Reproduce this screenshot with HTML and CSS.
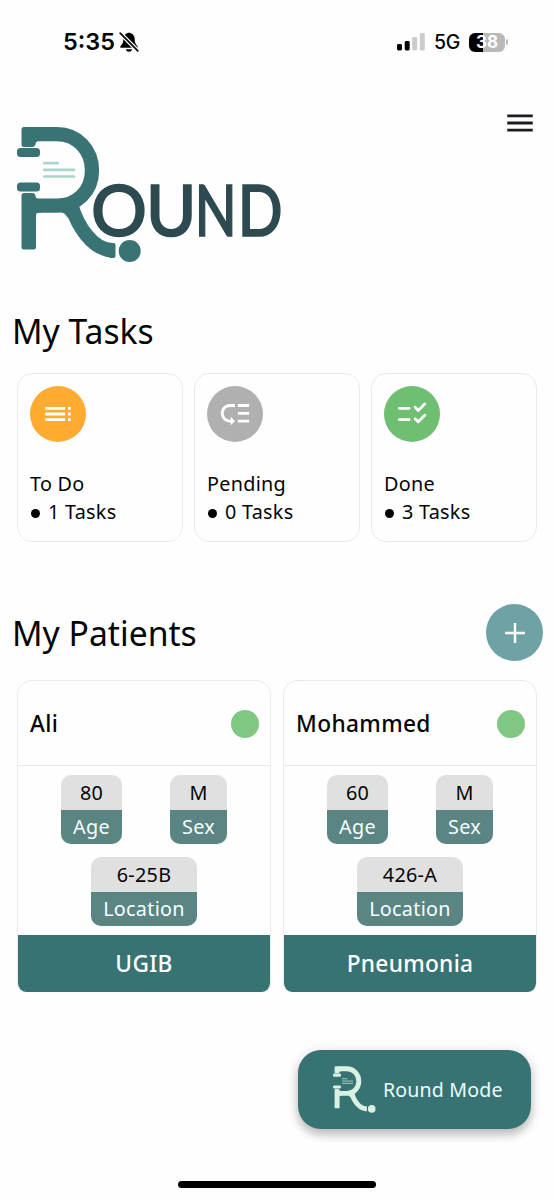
FILE: index.html
```html
<!DOCTYPE html>
<html lang="en">
<head>
<meta charset="utf-8">
<meta name="viewport" content="width=device-width, initial-scale=1">
<title>Round</title>
<link rel="stylesheet" href="styles.css">
</head>
<body>
<svg class="defs" aria-hidden="true">
  <symbol id="mark" viewBox="17 126 125 137">
    <path class="mark-tube" d="M35 134.2H57C77 134.2 92 150 92 170.500C92 191 77 205.700 57 205.700H30"/>
    <path class="mark-tube" d="M71.500 206C77 224 91 249.500 113 250.500"/>
    <path class="mark-fill" d="M24 127H40V141H39Q36 141 35.500 144Q35 147 32.500 147H24Q21.500 147 21.500 144.500V129.500Q21.500 127 24 127ZM24 193H32.500Q35 193 35.500 196Q36 199 39 199H42V212.500H39Q36 212.500 36 215.500V247Q36 249.500 33.500 249.500H24Q21.500 249.500 21.500 247V195.500Q21.500 193 24 193ZM66 199L85 201Q78 205 79 209L75 220L67 217Q65 212.500 61 212.500Z"/>
    <rect class="mark-fill" x="17" y="148" width="23" height="9" rx="3.500"/>
    <rect class="mark-fill" x="17" y="182.500" width="23" height="9" rx="3.500"/>
    <rect class="mark-fill" x="109" y="243" width="6.500" height="15" rx="2"/>
    <circle class="mark-fill" cx="129.700" cy="251" r="11"/>
    <path class="mark-lines" d="M44.300 163.200H57.700M44.300 169.900H74M44.300 176.500H74"/>
  </symbol>
</svg>

<div class="statusbar">
  <div class="clock">
    <span>5:35</span>
    <svg class="bell" viewBox="0 0 20 20"><path d="M10 0.800C7.500 0.800 4.500 3 4.300 7C4.200 11 3.500 12 1.300 14.500Q.8 15.800 2 15.800H18Q19.200 15.800 18.700 14.500C16.500 12 15.800 11 15.700 7C15.500 3 12.500 .8 10 .8ZM6.800 17.300H13.200Q12.500 19.800 10 19.800T6.800 17.300Z"/><path class="bell-gap" d="M1.200 1.200L18.800 18.800"/><path class="bell-slash" d="M1.200 1.200L18.800 18.800"/></svg>
  </div>
  <div class="signals">
    <svg class="bars" viewBox="0 0 28 18"><rect x="0" y="11" width="5" height="6.500" rx="1.400"/><rect x="7.700" y="8" width="5" height="9.500" rx="1.400"/><rect class="dim" x="15.200" y="4" width="5" height="13.500" rx="1.400"/><rect class="dim" x="22.800" y="0" width="5" height="17.500" rx="1.400"/></svg>
    <span class="net">5G</span>
    <div class="battery"><span class="level">38</span><span class="tip"></span></div>
  </div>
</div>

<header class="header">
  <svg class="logo" viewBox="17 126 265 137">
    <use href="#mark" x="17" y="126" width="125" height="137"/>
    <g class="wordmark">
      <text transform="translate(91 235.500) scale(.97 1)">O</text>
      <text transform="translate(146 235.500) scale(.95 1)">U</text>
      <text transform="translate(194.800 235.500) scale(.76 1)">N</text>
      <text transform="translate(237.800 235.500) scale(.82 1)">D</text>
    </g>
  </svg>
  <svg class="menu" viewBox="0 0 24 24"><path d="M3 18h18v-2H3v2zm0-5h18v-2H3v2zm0-7v2h18V6H3z"/></svg>
</header>

<main>
  <h1 class="tasks-title">My Tasks</h1>
  <section class="tasks">
    <article class="task">
      <span class="badge todo"><svg viewBox="0 0 24 24"><path d="M3 9h14V7H3v2zm0 4h14v-2H3v2zm0 4h14v-2H3v2zm16 0h2v-2h-2v2zm0-10v2h2V7h-2zm0 6h2v-2h-2v2z"/></svg></span>
      <p>To Do</p><p class="count"><i></i>1 Tasks</p>
    </article>
    <article class="task">
      <span class="badge pending"><svg viewBox="0 0 24 24"><path d="M14 5h8v2h-8zm0 5.500h8v2h-8zm0 5.500h8v2h-8zM2 11.500C2 15.080 4.920 18 8.500 18H9v2l3-3-3-3v2h-.5C6.020 16 4 13.980 4 11.500S6.020 7 8.500 7H12V5H8.500C4.920 5 2 7.920 2 11.500z"/></svg></span>
      <p>Pending</p><p class="count"><i></i>0 Tasks</p>
    </article>
    <article class="task">
      <span class="badge done"><svg viewBox="0 0 24 24"><path class="stroke" d="M3 8H10M3 16H10M14.200 7.300L16.400 9.500L21 4.900M14.200 15.300L16.400 17.500L21 12.900"/></svg></span>
      <p>Done</p><p class="count"><i></i>3 Tasks</p>
    </article>
  </section>

  <div class="patients-head">
    <h1>My Patients</h1>
    <span class="add"><svg viewBox="0 0 24 24"><path d="M19 12.850h-6.150v6.150h-1.700v-6.150H5v-1.700h6.150V5h1.700v6.150H19z"/></svg></span>
  </div>
  <section class="patients">
    <article class="patient">
      <div class="name"><span>Ali</span><i></i></div>
      <div class="facts">
        <dl class="chip age"><dd>80</dd><dt>Age</dt></dl>
        <dl class="chip sex"><dd>M</dd><dt>Sex</dt></dl>
        <dl class="chip location"><dd>6-25B</dd><dt>Location</dt></dl>
      </div>
      <div class="diagnosis">UGIB</div>
    </article>
    <article class="patient">
      <div class="name"><span>Mohammed</span><i></i></div>
      <div class="facts">
        <dl class="chip age"><dd>60</dd><dt>Age</dt></dl>
        <dl class="chip sex"><dd>M</dd><dt>Sex</dt></dl>
        <dl class="chip location"><dd>426-A</dd><dt>Location</dt></dl>
      </div>
      <div class="diagnosis">Pneumonia</div>
    </article>
  </section>
  <div class="round-mode">
    <svg viewBox="17 126 125 137"><use href="#mark" x="17" y="126" width="125" height="137"/></svg>
    <span>Round Mode</span>
  </div>
</main>
<div class="home"></div>
</body>
</html>
```
FILE: styles.css
```css
* { box-sizing: border-box; }
body {
  margin: 0;
  height: 1200px;
  display: flex;
  flex-direction: column;
  overflow: hidden;
  background: #fefefe;
  color: #050505;
  font: 19.8px/28px "Noto Sans", sans-serif;
  letter-spacing: .28px;
}
h1, p, dl, dd, dt { margin: 0; }
svg { display: block; flex: none; }
.defs { position: absolute; width: 0; height: 0; }

.statusbar {
  height: 84px;
  flex: none;
  padding: 0 46px 0 63px;
  display: flex;
  align-items: center;
  justify-content: space-between;
  font-family: Inter, sans-serif;
  letter-spacing: 0;
}
.clock { display: flex; align-items: center; gap: 4px; font-size: 23.5px; font-weight: 600; }
.bell { width: 20px; height: 20px; }
.bell-gap { stroke: #fefefe; stroke-width: 4.2; }
.bell-slash { stroke: #050505; stroke-width: 1.7; stroke-linecap: round; }
.signals { display: flex; align-items: center; }
.bars { width: 28px; height: 18px; }
.dim { fill: #ccc; }
.net { width: 27px; margin-left: 9px; font-size: 19.5px; font-weight: 500; letter-spacing: -.3px; }
.battery { margin-left: 8px; display: flex; align-items: center; gap: 1px; }
.level {
  width: 36px;
  height: 19px;
  border-radius: 6px;
  background: linear-gradient(90deg, #000 38%, #b9b9b9 38%);
  color: #fff;
  font-size: 17px;
  font-weight: 700;
  line-height: 19px;
  text-align: center;
}
.tip { width: 2px; height: 6px; border-radius: 0 2px 2px 0; background: #b9b9b9; }

.header {
  height: 222px;
  flex: none;
  padding: 42px 17px 0;
  display: flex;
  align-items: flex-start;
  justify-content: space-between;
}
.logo { width: 265px; height: 137px; color: #397373; }
.menu { width: 34px; height: 34px; margin-top: -20px; fill: #1d1b20; }
.mark-fill { fill: currentColor; }
.mark-tube { fill: none; stroke: currentColor; stroke-width: 14.3; }
.mark-lines { fill: none; stroke: #a9d5ca; stroke-width: 2.7; stroke-linecap: round; }
.wordmark {
  fill: #2c4a50;
  stroke: #2c4a50;
  stroke-width: 1.6;
  font: 500 72px Lato, sans-serif;
  letter-spacing: 0;
}

h1 { font-size: 33.7px; line-height: 50px; font-weight: 400; letter-spacing: 0; }
.tasks-title { padding-left: 12px; }
.tasks { margin-top: 17px; padding: 0 17px; display: grid; grid-template-columns: repeat(3, 1fr); gap: 11px; }
.task { height: 169px; padding: 12px 11px 0 12px; border: 1px solid #eaeaea; border-radius: 15px; }
.badge { width: 56px; height: 56px; margin-bottom: 28px; border-radius: 50%; display: grid; place-items: center; }
.badge svg { width: 34px; height: 34px; fill: #fff; }
.todo { background: #ffab32; }
.pending { background: #b0b0b0; }
.done { background: #6fbf73; }
.stroke { fill: none; stroke: #fff; stroke-width: 2; stroke-linecap: round; stroke-linejoin: round; }
.count { display: flex; align-items: center; }
.count i { width: 9px; height: 9px; margin: 2px 8px 0 1px; border-radius: 50%; background: #000; }

.patients-head {
  height: 57px;
  margin-top: 62px;
  padding: 0 11px 0 12px;
  display: flex;
  align-items: center;
  justify-content: space-between;
}
.add { width: 57px; height: 57px; border-radius: 50%; background: #6fa2a5; display: grid; place-items: center; }
.add svg { width: 34px; height: 34px; fill: #fff; }
.patients { margin-top: 19px; padding: 0 17px; display: grid; grid-template-columns: 1fr 1fr; gap: 12px; }
.patient { height: 312px; border: 1px solid #eaeaea; border-bottom: 0; border-radius: 15px 15px 9px 9px; display: flex; flex-direction: column; overflow: hidden; }
.name {
  height: 85px;
  flex: none;
  padding: 2px 11px 0 12px;
  display: flex;
  align-items: center;
  justify-content: space-between;
  border-bottom: 1px solid #e9e9e9;
  font-size: 22.700px;
  font-weight: 500;
  letter-spacing: .35px;
}
.name i { width: 28px; height: 28px; border-radius: 50%; background: #81c784; }
.facts {
  flex: 1;
  padding: 9px 43px 0;
  display: flex;
  flex-wrap: wrap;
  justify-content: space-between;
  align-content: flex-start;
  row-gap: 13px;
}
.chip { height: 69px; border-radius: 10px; overflow: hidden; text-align: center; line-height: 34px; background: #e0e0e0; }
.chip dd { height: 35px; line-height: 35px; }
.chip dt { height: 34px; background: #5b8583; color: #f5ffff; }
.age { width: 61px; }
.sex { width: 57px; }
.location { width: 106px; margin: 0 auto; }
.diagnosis {
  height: 57px;
  background: #387373;
  color: #fff;
  font-size: 22.700px;
  font-weight: 500;
  line-height: 57px;
  text-align: center;
  letter-spacing: .3px;
}
.round-mode {
  width: 233px;
  height: 79px;
  margin: 58px 23px 0 auto;
  padding-left: 35px;
  display: flex;
  align-items: center;
  gap: 7px;
  border-radius: 23px;
  background: #387373;
  color: #e9fbfb;
  font-size: 19.600px;
  letter-spacing: .15px;
  box-shadow: 0 6px 10px rgba(0, 0, 0, .22), 0 1px 14px rgba(0, 0, 0, .1);
}
.round-mode svg { width: 43px; height: 47px; color: #d9f2e3; }
.home { width: 198px; height: 7px; margin: 52px auto 0; border-radius: 4px; background: #000; flex: none; }
```
